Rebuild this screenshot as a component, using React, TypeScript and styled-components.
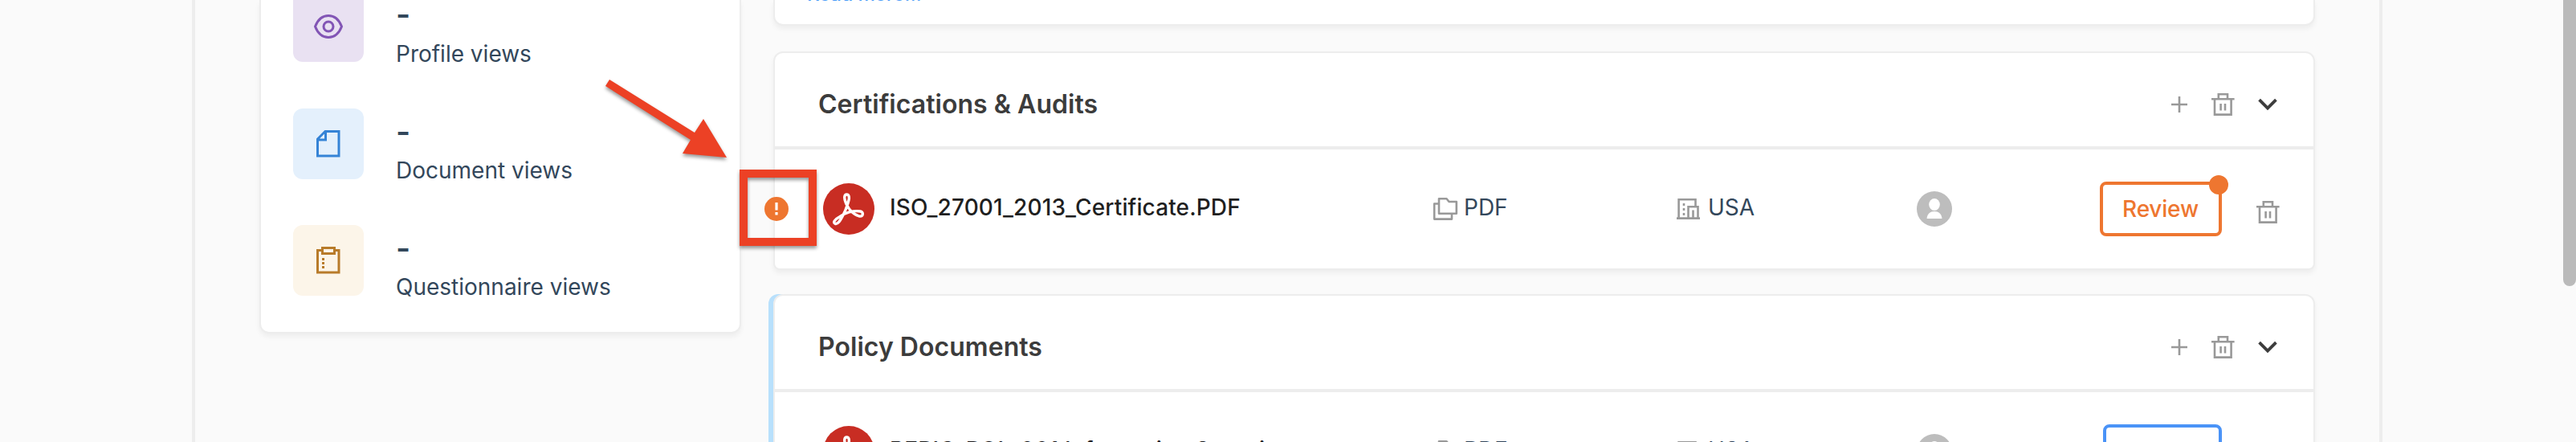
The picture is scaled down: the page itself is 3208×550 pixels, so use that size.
import React from "react";
import styled, { createGlobalStyle, css } from "styled-components";

const Global = createGlobalStyle`
  * { box-sizing: border-box; }
  body { margin: 0; background: #fafafa; overflow: hidden; font-family: Inter, "Liberation Sans", sans-serif; }
`;

const Page = styled.div`
  position: relative;
  height: 550px;
  padding: 0 241px 0 239px;
  overflow: hidden;
  background: #fafafa;
`;
const Frame = styled.main`
  height: 550px;
  border: solid #ededed;
  border-width: 0 4px;
  display: flex;
  align-items: flex-start;
  padding: 0 80px;
`;
const Sidebar = styled.aside`
  width: 600px;
  height: 415px;
  margin-right: 40px;
  padding-left: 40px;
  border: 2px solid #ededed;
  border-top: 0;
  border-radius: 0 0 12px 12px;
  background: #fff;
  box-shadow: 0 4px 6px rgba(0, 0, 0, 0.05);
  flex: none;
`;
const Stat = styled.div`
  display: flex;
  height: 88px;
  margin-bottom: 57.33px;
  &:first-child { margin-top: -10.67px; }
`;
const StatIcon = styled.div<{ $bg: string }>`
  width: 88px;
  height: 88px;
  margin-right: 40px;
  border-radius: 12px;
  background: ${(p) => p.$bg};
  display: flex;
  align-items: center;
  justify-content: center;
`;
const StatText = styled.div`
  color: #33475b;
  font-size: 28px;
  line-height: 40px;
  white-space: nowrap;
`;
const StatValue = styled.div`
  height: 57.3px;
  font-size: 39px;
  line-height: 58px;
  font-weight: 600;
`;

const Content = styled.div`
  flex: 1;
  min-width: 0;
`;
const card = css`
  border: 2px solid #ededed;
  background: #fff;
  box-shadow: 0 4px 6px rgba(0, 0, 0, 0.05);
`;
const Intro = styled.section`
  ${card}
  height: 32px;
  border-top: 0;
  border-radius: 0 0 12px 12px;
  margin-bottom: 32px;
  padding-left: 40px;
  overflow: hidden;
`;
const ReadMore = styled.a`
  display: block;
  margin-top: -22px;
  font-size: 24px;
  line-height: 30px;
  font-weight: 500;
  letter-spacing: -0.2px;
  color: #4a9cf8;
`;
const Section = styled.section<{ $marked?: boolean }>`
  ${card}
  height: ${(p) => (p.$marked ? 300 : 272)}px;
  border-radius: 12px 12px 8px 8px;
  margin-bottom: 30px;
  ${(p) => p.$marked && "box-shadow: -6px 0 0 #b8e0fc, 0 4px 6px rgba(0, 0, 0, 0.05);"}
`;
const SectionHead = styled.header`
  height: 120px;
  border-bottom: 4px solid #ededed;
  padding: 12px 45px 0 54px;
  display: flex;
  align-items: center;
`;
const Title = styled.h2`
  margin: 0 auto 0 0;
  font-size: 32px;
  line-height: 40px;
  font-weight: 600;
  letter-spacing: 0.04px;
  color: #3c3c3c;
`;
const HeadIcons = styled.div`
  display: flex;
  align-items: center;
`;
const IconSlot = styled.span<{ $w: number }>`
  width: ${(p) => p.$w}px;
  display: flex;
`;
const Row = styled.div`
  position: relative;
  height: 148px;
  padding-left: 60px;
  display: flex;
  align-items: center;
`;
const FileName = styled.div`
  width: 676px;
  margin-left: 19px;
  padding-bottom: 4px;
  font-size: 28px;
  line-height: 40px;
  font-weight: 500;
  letter-spacing: 0.13px;
  color: #1f1f1f;
  white-space: nowrap;
`;
const Meta = styled.div<{ $w: number }>`
  width: ${(p) => p.$w}px;
  display: flex;
  align-items: center;
  gap: 7px;
`;
const MetaLabel = styled.span`
  padding-bottom: 4px;
  font-size: 28px;
  line-height: 40px;
  color: #33475b;
`;
const Action = styled.div`
  width: 152px;
  margin-left: 184px;
  margin-right: 43px;
  display: flex;
  justify-content: flex-end;
`;
const RowDelete = styled.div`
  display: flex;
  padding-top: 8px;
`;
const Button = styled.button<{ $color: string; $w: number }>`
  position: relative;
  width: ${(p) => p.$w}px;
  height: 68px;
  padding: 0 1px 0 0;
  flex: none;
  border: 4px solid ${(p) => p.$color};
  border-radius: 8px;
  background: #fff;
  color: ${(p) => p.$color};
  font: 500 28px/40px Inter, sans-serif;
  letter-spacing: -0.2px;
`;
const Dot = styled.i`
  position: absolute;
  top: -12px;
  right: -12px;
  width: 24px;
  height: 24px;
  border-radius: 50%;
  background: #ee7630;
`;
const Warning = styled.svg`
  position: absolute;
  left: -13px;
  top: 59px;
`;
const Callout = styled.div`
  position: absolute;
  left: 921px;
  top: 211px;
  width: 96px;
  height: 95px;
  border: 10px solid #ec4125;
  filter: drop-shadow(0 3px 2px rgba(0, 0, 0, 0.4));
`;
const Arrow = styled.svg`
  position: absolute;
  left: 740px;
  top: 80px;
  filter: drop-shadow(0 3px 2px rgba(0, 0, 0, 0.4));
`;
const Scrollbar = styled.div`
  position: absolute;
  right: 0;
  top: -20px;
  width: 16px;
  height: 376px;
  border-radius: 8px;
  background: #bababa;
`;

const Trash = () => (
  <svg width="30" height="30" viewBox="0 0 30 30" fill="none" stroke="#999" strokeWidth="2.6">
    <path d="M0 8.2H28.600M8.800 8V2.200H20V8M4 8V27.600H24.600V8M11.600 14V22.500M17 14V22.500" />
  </svg>
);
const Plus = () => (
  <svg width="20" height="20" viewBox="0 0 20 20" stroke="#999" strokeWidth="2.6">
    <path d="M0 10H20M10 0V20" />
  </svg>
);
const Chevron = () => (
  <svg width="24" height="16" viewBox="0 0 24 16" fill="none" stroke="#3c3c3c" strokeWidth="3.8">
    <path d="M1.600 2.200L12 12.600L22.400 2.200" />
  </svg>
);
const PdfBadge = () => (
  <svg width="64" height="64" viewBox="0 0 64 64" fill="none">
    <circle cx="32" cy="32" r="32" fill="#c82d23" />
    <path
      d="M29.500 14C26 14 26 19 28.300 24.300C31 31 37 38.500 45 41C50 42 51 36 46.500 35C38 33.500 27 36.500 19.500 42.500C14.500 45 12 49 15 50.300C18.500 51.500 21.500 46.500 25 39.500C28.500 33 30.500 27 32 21C33 17 32 14 29.500 14Z"
      stroke="#fff"
      strokeWidth="3.4"
      strokeLinejoin="round"
    />
  </svg>
);
const Folders = () => (
  <svg width="32" height="30" viewBox="0 0 32 30" fill="none" stroke="#999" strokeWidth="2.6" strokeLinejoin="round">
    <path d="M8 2.300H17.500L20.500 6H29.800V20.800H8ZM7 8.500H2.200V27.600H24V21" />
  </svg>
);
const Building = () => (
  <svg width="32" height="28" viewBox="0 0 32 28" fill="none" stroke="#999" strokeWidth="2.6">
    <path d="M0 25.600H29M2.600 25V2.200H23.500V11M14.500 25V11.300H26.500V25M20.500 25V15.500M9 7V10M9 13V16M9 19V22" />
  </svg>
);
const Avatar = () => (
  <svg width="44" height="44" viewBox="0 0 44 44">
    <circle cx="22" cy="22" r="22" fill="#bdbdbd" />
    <ellipse cx="22" cy="16.500" rx="6.800" ry="7.500" fill="#fff" />
    <path d="M12.500 34C13 28 17 25 22 25S31 28 31.500 34Z" fill="#fff" />
  </svg>
);
const Eye = () => (
  <svg width="38" height="32" viewBox="0 0 38 32" fill="none" stroke="#8255b5" strokeWidth="3">
    <path d="M2.500 16C6 7 11 2.500 19 2.500S32 7 35.500 16C32 25 27 29.500 19 29.500S6 25 2.500 16Z" />
    <circle cx="19" cy="16" r="6" />
  </svg>
);
const Doc = () => (
  <svg width="32" height="36" viewBox="0 0 32 36" fill="none" stroke="#3583d6" strokeWidth="3">
    <path d="M12 2.500H29V33H2.500V12ZM12.500 2.500V13H2.500" />
  </svg>
);
const Clipboard = () => (
  <svg width="32" height="36" viewBox="0 0 32 36" fill="none" stroke="#b87b2a" strokeWidth="3">
    <path d="M8 5.500H2.500V33H29V5.500H24M8.500 2.500H23.500V9.500H8.500ZM9.500 15V18M9.500 20V23M9.500 25V28" />
  </svg>
);

const stats = [
  { label: "Profile views", bg: "#e9e1f2", icon: <Eye /> },
  { label: "Document views", bg: "#e4f0fc", icon: <Doc /> },
  { label: "Questionnaire views", bg: "#fcf5e9", icon: <Clipboard /> },
];

interface DocumentRowProps {
  name: string;
  alert?: boolean;
}
const DocumentRow = ({ name, alert }: DocumentRowProps) => (
  <Row>
    {alert && (
      <Warning width="30" height="30" viewBox="0 0 30 30">
        <circle cx="15" cy="15" r="15" fill="#ee7630" />
        <path d="M15 7V16.500M15 19V22.500" stroke="#fff" strokeWidth="3.200" />
      </Warning>
    )}
    <PdfBadge />
    <FileName>{name}</FileName>
    <Meta $w={304}><Folders /><MetaLabel>PDF</MetaLabel></Meta>
    <Meta $w={299}><Building /><MetaLabel>USA</MetaLabel></Meta>
    <Avatar />
    <Action>
      <Button $color={alert ? "#ee7630" : "#4a93f7"} $w={alert ? 152 : 148}>
        {alert && "Review"}
        {alert && <Dot />}
      </Button>
    </Action>
    <RowDelete><Trash /></RowDelete>
  </Row>
);

const SectionHeader = ({ title }: { title: string }) => (
  <SectionHead>
    <Title>{title}</Title>
    <HeadIcons>
      <IconSlot $w={50}><Plus /></IconSlot>
      <IconSlot $w={58}><Trash /></IconSlot>
      <Chevron />
    </HeadIcons>
  </SectionHead>
);

export default function App() {
  return (
    <Page>
      <Global />
      <Frame>
        <Sidebar>
          {stats.map((s) => (
            <Stat key={s.label}>
              <StatIcon $bg={s.bg}>{s.icon}</StatIcon>
              <StatText>
                <StatValue>-</StatValue>
                {s.label}
              </StatText>
            </Stat>
          ))}
        </Sidebar>
        <Content>
          <Intro><ReadMore>Read more...</ReadMore></Intro>
          <Section>
            <SectionHeader title="Certifications & Audits" />
            <DocumentRow name="ISO_27001_2013_Certificate.PDF" alert />
          </Section>
          <Section $marked>
            <SectionHeader title="Policy Documents" />
            <DocumentRow name="REPIC_POL_001 Information Security" />
          </Section>
        </Content>
      </Frame>
      <Callout />
      <Arrow width="180" height="130" viewBox="740 80 180 130">
        <path d="M759 99L865 165L876 148L905 196L850 191L860 174L754 107Z" fill="#ec4125" />
      </Arrow>
      <Scrollbar />
    </Page>
  );
}
